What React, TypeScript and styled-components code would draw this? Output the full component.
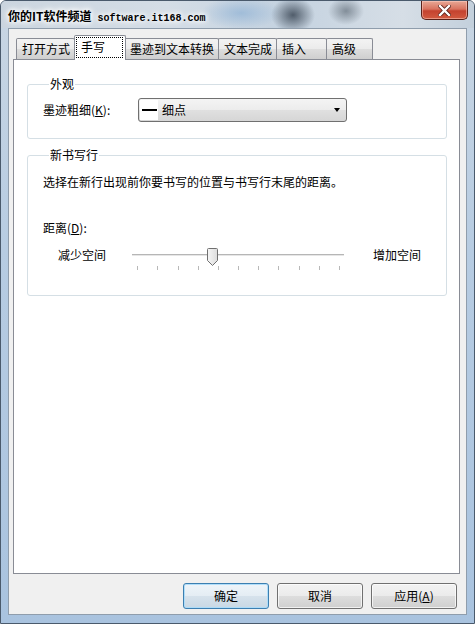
import React from 'react'
import styled, { createGlobalStyle } from 'styled-components'

const GlobalStyle = createGlobalStyle`
	html, body {
		margin: 0;
		padding: 0;
		width: 475px;
		height: 624px;
		overflow: hidden;
		background: #ffffff;
	}
	body {
		font-family: "Noto Sans CJK SC", "Noto Sans", sans-serif;
		font-size: 12px;
		color: #000;
	}
`

const Window = styled.div`
	box-sizing: border-box;
	width: 475px;
	height: 624px;
	display: flex;
	flex-direction: column;
	border: 1px solid #4a5a6c;
	border-radius: 6px 6px 0 0;
	background: linear-gradient(to bottom, #c9d6e3 0%, #b7cce2 40%, #a9c3df 100%);
`

const TitleBar = styled.div`
	height: 27px;
	display: flex;
	justify-content: space-between;
	align-items: flex-start;
	padding: 0 6px 0 7px;
	border-radius: 5px 5px 0 0;
	background:
		radial-gradient(ellipse 22px 18px at 292px 14px, rgba(60, 72, 86, 0.85), rgba(60, 72, 86, 0) 100%),
		radial-gradient(ellipse 18px 14px at 345px 10px, rgba(80, 92, 104, 0.6), rgba(80, 92, 104, 0) 100%),
		radial-gradient(ellipse 40px 16px at 240px 12px, rgba(150, 182, 214, 0.8), rgba(150, 182, 214, 0) 100%),
		linear-gradient(to right, #cbd5df 0%, #d4dde6 35%, #c4d2e0 60%, #d6dee6 85%, #c3d0dc 100%);
`

const TitleText = styled.div`
	margin-top: 7px;
	line-height: 16px;
	font-size: 12px;
	font-weight: 600;
	color: #000;
	text-shadow: 0 0 4px #fff, 0 0 6px #fff, 0 0 8px #fff;
	white-space: nowrap;
`

const TitleUrl = styled.span`
	font-family: "Liberation Mono", "DejaVu Sans Mono", monospace;
	font-size: 10px;
	font-weight: 700;
	margin-left: 6px;
`

const CloseButton = styled.div`
	width: 47px;
	height: 19px;
	box-sizing: border-box;
	display: flex;
	align-items: center;
	justify-content: center;
	border: 1px solid #5a2119;
	border-top: none;
	border-radius: 0 0 5px 5px;
	background: linear-gradient(to bottom, #e8a896 0%, #d9735f 45%, #c4422f 55%, #d25a40 100%);
	box-shadow: inset 0 0 0 1px rgba(255, 210, 200, 0.5);
`

const Client = styled.div`
	flex: 1;
	margin: 0 7px 8px 7px;
	display: flex;
	flex-direction: column;
	padding: 6px 6px 5px 4px;
	border: 1px solid #8f9dac;
	background: #f0f0f0;
`

const TabRow = styled.div`
	height: 24px;
	display: flex;
	align-items: flex-end;
	padding-left: 3px;
`

const Tab = styled.div<{ $width: number }>`
	box-sizing: border-box;
	width: ${p => p.$width}px;
	height: 21px;
	margin-left: -1px;
	padding: 2px 0 0 5px;
	line-height: 16px;
	white-space: nowrap;
	border: 1px solid #898c95;
	border-bottom: none;
	border-radius: 2px 2px 0 0;
	background: linear-gradient(to bottom, #f3f3f3 0%, #ebebeb 50%, #dddddd 51%, #cfcfcf 100%);
	&:first-child {
		margin-left: 0;
	}
`

const ActiveTab = styled.div<{ $width: number }>`
	box-sizing: border-box;
	position: relative;
	z-index: 2;
	width: ${p => p.$width}px;
	height: 25px;
	margin: 0 -1px -1px -1px;
	padding: 1px 2px 2px 1px;
	display: flex;
	border: 1px solid #898c95;
	border-bottom: none;
	border-radius: 2px 2px 0 0;
	background: #ffffff;
`

const FocusBox = styled.div`
	flex: 1;
	padding: 1px 0 0 4px;
	line-height: 16px;
	border: 1px dotted #000;
`

const Panel = styled.div`
	box-sizing: border-box;
	height: 515px;
	padding: 16px 12px 0 13px;
	border: 1px solid #898c95;
	background: #ffffff;
	display: flex;
	flex-direction: column;
	gap: 8px;
`

const Group = styled.fieldset<{ $bottom: number }>`
	margin: 0;
	padding: 0 14px ${p => p.$bottom}px 15px;
	border: 1px solid #d5dfe5;
	border-radius: 3px;
	min-width: 0;
`

const Legend = styled.legend`
	margin-left: 6px;
	padding: 0 1px;
	line-height: 16px;
	font-size: 12px;
	color: #000;
`

const FieldRow = styled.div`
	display: flex;
	align-items: center;
	margin-top: 6px;
`

const FieldLabel = styled.div`
	width: 95px;
	line-height: 16px;
	white-space: nowrap;
`

const Combo = styled.div`
	box-sizing: border-box;
	width: 209px;
	height: 24px;
	padding: 1px 6px 1px 1px;
	display: flex;
	align-items: center;
	border: 1px solid #707070;
	border-radius: 3px;
	background: linear-gradient(to bottom, #f4f4f4 0%, #ececec 50%, #e0e0e0 51%, #d6d6d6 100%);
`

const Swatch = styled.div`
	width: 18px;
	height: 100%;
	display: flex;
	align-items: center;
	justify-content: center;
	background: #ffffff;
`

const SwatchLine = styled.div`
	width: 15px;
	height: 2px;
	background: #000;
`

const ComboText = styled.div`
	flex: 1;
	padding-left: 4px;
	line-height: 16px;
`

const ComboArrow = styled.div`
	width: 0;
	height: 0;
	border-left: 3.5px solid transparent;
	border-right: 3.5px solid transparent;
	border-top: 4px solid #000;
`

const Paragraph = styled.div<{ $top: number }>`
	margin-top: ${p => p.$top}px;
	line-height: 16px;
	white-space: nowrap;
`

const SliderRow = styled.div`
	margin-top: 11px;
	height: 28px;
	display: flex;
	align-items: flex-start;
	padding-left: 15px;
`

const SliderLabel = styled.div<{ $gap: number }>`
	margin-right: ${p => p.$gap}px;
	line-height: 16px;
	white-space: nowrap;
`

const SliderTrackArea = styled.div`
	position: relative;
	width: 212px;
	height: 28px;
	margin-right: 29px;
`

const Track = styled.div`
	position: absolute;
	left: 0;
	right: 0;
	top: 7px;
	height: 2px;
	border-top: 1px solid #b6b6b6;
	background: #e6e6e6;
	box-sizing: border-box;
`

const Thumb = styled.svg`
	position: absolute;
	left: 75px;
	top: 1px;
`

const Tick = styled.div`
	position: absolute;
	top: 19px;
	width: 1px;
	height: 4px;
	background: #b8b8b8;
`

const ButtonRow = styled.div`
	margin-top: 9px;
	display: flex;
	justify-content: flex-end;
	gap: 8px;
	padding-right: 3px;
`

const Button = styled.div<{ $default?: boolean }>`
	box-sizing: border-box;
	width: 86px;
	height: 26px;
	display: flex;
	align-items: center;
	justify-content: center;
	line-height: 16px;
	border: 1px solid ${p => (p.$default ? '#3c7fb1' : '#707070')};
	border-radius: 3px;
	background: ${p =>
		p.$default
			? 'linear-gradient(to bottom, #eef4f9 0%, #e4edf4 50%, #d6e2ec 51%, #c9d8e4 100%)'
			: 'linear-gradient(to bottom, #f2f2f2 0%, #ebebeb 50%, #dddddd 51%, #cfcfcf 100%)'};
	box-shadow: inset 0 0 0 1px ${p => (p.$default ? 'rgba(170, 220, 250, 0.9)' : 'rgba(255, 255, 255, 0.7)')};
`

const Key = styled.span`
	text-decoration: underline;
`

const tickPositions = [5, 25, 46, 66, 86, 106, 126, 146, 167, 187, 207]

const CloseIcon: React.FC = () => (
	<svg width="13" height="11" viewBox="0 0 13 11">
		<path d="M2 1 L11 10 M11 1 L2 10" stroke="#5a2119" strokeWidth="4" strokeLinecap="square" />
		<path d="M2 1 L11 10 M11 1 L2 10" stroke="#ffffff" strokeWidth="2.4" strokeLinecap="square" />
	</svg>
)

const App: React.FC = () => {
	return (
		<>
			<GlobalStyle />
			<Window>
				<TitleBar>
					<TitleText>
						你的IT软件频道<TitleUrl>software.it168.com</TitleUrl>
					</TitleText>
					<CloseButton>
						<CloseIcon />
					</CloseButton>
				</TitleBar>
				<Client>
					<TabRow>
						<Tab $width={59}>打开方式</Tab>
						<ActiveTab $width={52}>
							<FocusBox>手写</FocusBox>
						</ActiveTab>
						<Tab $width={95}>墨迹到文本转换</Tab>
						<Tab $width={59}>文本完成</Tab>
						<Tab $width={51}>插入</Tab>
						<Tab $width={47}>高级</Tab>
					</TabRow>
					<Panel>
						<Group $bottom={16}>
							<Legend>外观</Legend>
							<FieldRow>
								<FieldLabel>
									墨迹粗细(<Key>K</Key>):
								</FieldLabel>
								<Combo>
									<Swatch>
										<SwatchLine />
									</Swatch>
									<ComboText>细点</ComboText>
									<ComboArrow />
								</Combo>
							</FieldRow>
						</Group>
						<Group $bottom={20}>
							<Legend>新书写行</Legend>
							<Paragraph $top={11}>选择在新行出现前你要书写的位置与书写行末尾的距离。</Paragraph>
							<Paragraph $top={30}>
								距离(<Key>D</Key>):
							</Paragraph>
							<SliderRow>
								<SliderLabel $gap={26}>减少空间</SliderLabel>
								<SliderTrackArea>
									<Track />
									{tickPositions.map(x => (
										<Tick key={x} style={{ left: x }} />
									))}
									<Thumb width="11" height="18" viewBox="0 0 11 18">
										<defs>
											<linearGradient id="thumbFill" x1="0" y1="0" x2="1" y2="0">
												<stop offset="0" stopColor="#f6f6f6" />
												<stop offset="1" stopColor="#dcdcdc" />
											</linearGradient>
										</defs>
										<path
											d="M1.5 0.5 H9.5 Q10.5 0.5 10.5 1.5 V12.5 L5.5 17.5 L0.5 12.5 V1.5 Q0.5 0.5 1.5 0.5 Z"
											fill="url(#thumbFill)"
											stroke="#707070"
										/>
									</Thumb>
								</SliderTrackArea>
								<SliderLabel $gap={0}>增加空间</SliderLabel>
							</SliderRow>
						</Group>
					</Panel>
					<ButtonRow>
						<Button $default>确定</Button>
						<Button>取消</Button>
						<Button>
							应用(<Key>A</Key>)
						</Button>
					</ButtonRow>
				</Client>
			</Window>
		</>
	)
}

export default App
